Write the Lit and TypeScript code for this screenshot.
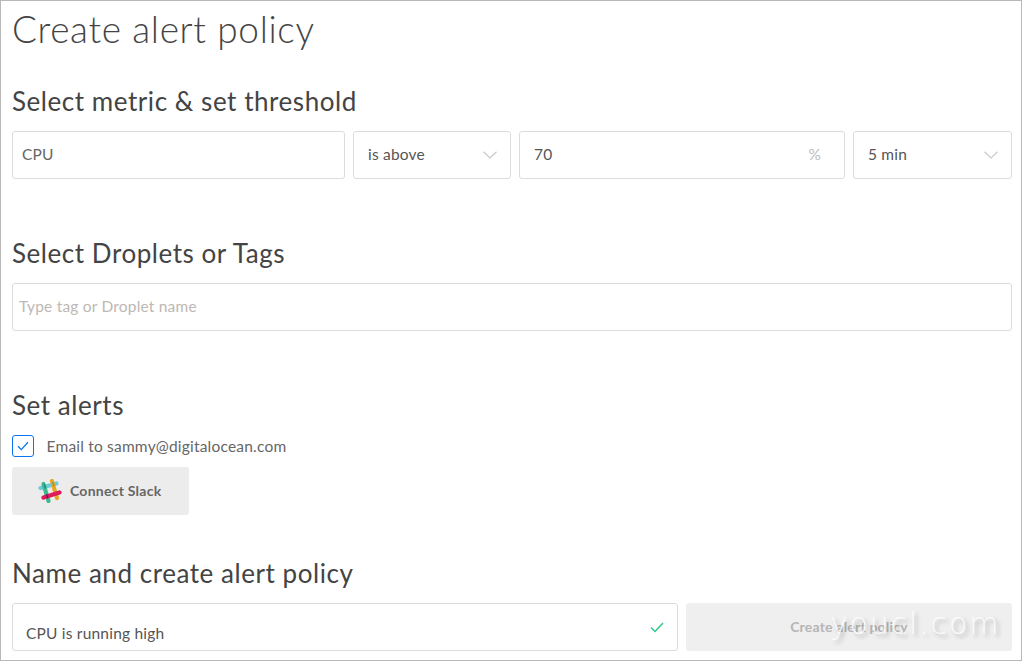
import { LitElement, html, css } from "lit";
import { customElement } from "lit/decorators.js";

const chevron = html`<svg class="chev" width="14" height="8" viewBox="0 0 14 8"><path d="M.5.8 7 7 13.5.8" fill="none" stroke="#c9c9c9" stroke-width="1.2"/></svg>`;

@customElement("app-root")
export class AppRoot extends LitElement {
  static styles = css`
    :host { display: block; width: 1022px; height: 661px; overflow: hidden; }
    * { box-sizing: border-box; }
    .frame {
      position: relative; width: 1022px; height: 661px; background: #fff;
      border: 1px solid #b8b8b8; padding: 0 9px 0 11px;
      font-family: Lato, "Liberation Sans", sans-serif; color: #444;
      overflow: hidden;
    }
    h1 { margin: 0; height: 85px; padding-top: 6px; font-size: 37px; line-height: 44px; font-weight: 300; color: #444; letter-spacing: 0.64px; }
    h2 { margin: 0 0 15px; height: 30px; font-size: 26px; line-height: 30px; font-weight: 400; color: #444; letter-spacing: 0.55px; }
    .section { margin-bottom: 59px; }
    .section.tight { margin-bottom: 43px; }
    .row { display: flex; gap: 8px; }
    .field {
      height: 48px; border: 1px solid #dcdcdc; border-radius: 3px; background: #fff;
      display: flex; align-items: center; justify-content: space-between;
      font-size: 15.5px; color: #555; padding: 0 14px; letter-spacing: 0.2px;
    }
    .field > span.t { position: relative; top: -1px; }
    .metric { width: 333px; padding-left: 9px; color: #666; }
    .op { width: 158px; padding-right: 13px; }
    .val { width: 326px; padding-right: 23px; }
    .pct { color: #bbb; }
    .dur { width: 159px; padding-right: 13px; }
    .chev { display: block; }
    .wide { padding-left: 6px; color: #bdb8b4; }
    .check { display: flex; align-items: center; height: 22px; margin-bottom: 10px; font-size: 15.5px; color: #666; letter-spacing: 0.2px; }
    .box { width: 22px; height: 22px; border: 1px solid #0a75f0; border-radius: 3px; margin-right: 12.5px; display: flex; align-items: center; justify-content: center; }
    .slack {
      width: 177px; height: 48px; background: #ececec; border-radius: 3px;
      display: flex; align-items: center; padding-left: 26px; gap: 8px;
      font-size: 14px; font-weight: 700; color: #666; letter-spacing: 0.25px;
    }
    .slack span { position: relative; top: -1px; }
    .name { width: 666px; padding-left: 13px; padding-right: 13px; color: #555; }
    .name span { position: relative; top: 6px; }
    .create {
      width: 326px; height: 48px; background: #efefef; border-radius: 3px;
      display: flex; align-items: center; justify-content: center;
      font-size: 14px; font-weight: 700; color: #b5b5b5; letter-spacing: 0.2px;
    }
    .create span { position: relative; top: -1px; }
    .mark {
      position: absolute; left: 829px; top: 605px; font-size: 30px; line-height: 36px; font-weight: 300;
      color: rgba(255,255,255,.85); letter-spacing: 1.85px; text-shadow: 3px 3px 4px rgba(0,0,0,.25);
      font-family: "DejaVu Sans", sans-serif; pointer-events: none;
    }
  `;

  render() {
    return html`<div class="frame">
      <h1>Create alert policy</h1>
      <div class="section">
        <h2>Select metric &amp; set threshold</h2>
        <div class="row">
          <div class="field metric"><span class="t">CPU</span></div>
          <div class="field op"><span class="t">is above</span> ${chevron}</div>
          <div class="field val"><span class="t">70</span> <span class="t pct">%</span></div>
          <div class="field dur"><span class="t">5 min</span> ${chevron}</div>
        </div>
      </div>
      <div class="section">
        <h2>Select Droplets or Tags</h2>
        <div class="field wide"><span class="t">Type tag or Droplet name</span></div>
      </div>
      <div class="section tight">
        <h2>Set alerts</h2>
        <div class="check">
          <div class="box"><svg width="12" height="10" viewBox="0 0 12 10"><path d="M1 5.2 4.3 8.6 11 1.2" fill="none" stroke="#0a75f0" stroke-width="1.3"/></svg></div>
          Email to sammy@digitalocean.com
        </div>
        <div class="slack">
          <svg width="24" height="24" viewBox="0 0 24 24" stroke-linecap="round" stroke-width="4.2" fill="none">
            <path d="M2.5 9 18.5 4.5" stroke="#70cadb"/>
            <path d="M5.5 5 10.5 22" stroke="#3eb890"/>
            <path d="M14 2 19 19" stroke="#e8a723"/>
            <path d="M5.5 18.5 21.5 13.5" stroke="#df1a5f"/>
            <path d="M6.3 7.5l1.2-.4" stroke="#1d8a72" stroke-linecap="butt"/>
            <path d="M14.6 5.2l1.2-.4" stroke="#6f9a5a" stroke-linecap="butt"/>
            <path d="M8.6 17.5l1.2-.4" stroke="#43264f" stroke-linecap="butt"/>
            <path d="M16.9 14.9l1.2-.4" stroke="#cc3a22" stroke-linecap="butt"/>
          </svg>
          <span>Connect Slack</span>
        </div>
      </div>
      <div>
        <h2>Name and create alert policy</h2>
        <div class="row">
          <div class="field name"><span>CPU is running high</span>
            <svg width="14" height="11" viewBox="0 0 14 11"><path d="M1 5.5 5 9.5 13 1" fill="none" stroke="#2fc98a" stroke-width="1.5"/></svg>
          </div>
          <div class="create"><span>Create alert policy</span></div>
        </div>
      </div>
      <div class="mark">youcl.com</div>
    </div>`;
  }
}
